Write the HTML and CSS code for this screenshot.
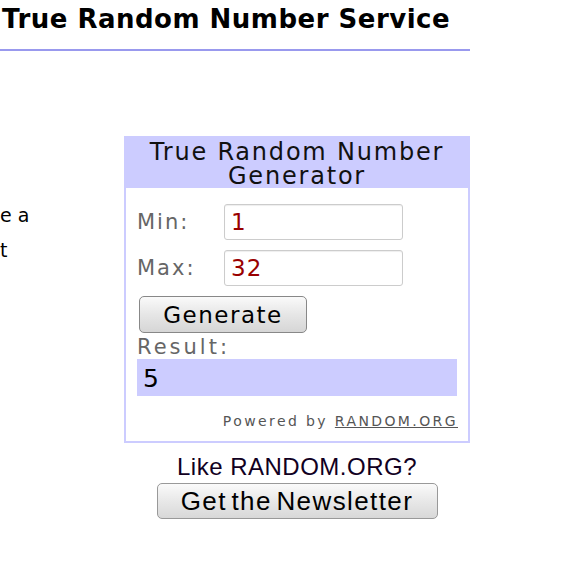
FILE: index.html
```html
<!DOCTYPE html>
<html lang="en">
<head>
  <meta charset="UTF-8" />
  <title>True Random Number Service</title>
  <link rel="stylesheet" href="styles.css">
</head>
<body>

  <!-- Page Title -->
  <h1 class="title">True Random Number Service</h1>
  <div class="rule"></div>

  <div class="content">
    <!-- Intro text (tail of the lines only) -->
    <div class="intro">
      <p>e a</p>
      <p>t</p>
    </div>

    <div class="side">
      <!-- Widget -->
      <div class="widget">
        <div class="widget-head">True Random Number Generator</div>
        <div class="widget-body">
          <div class="field">
            <label>Min:</label>
            <input type="text" value="1" />
          </div>
          <div class="field">
            <label>Max:</label>
            <input type="text" value="32" />
          </div>
          <button class="gen-btn">Generate</button>
          <div class="result-label">Result:</div>
          <div class="result">5</div>
          <div class="powered">Powered by <a href="#">RANDOM.ORG</a></div>
        </div>
      </div>

      <!-- Newsletter -->
      <div class="newsletter">
        <p>Like RANDOM.ORG?</p>
        <button class="news-btn">Get the Newsletter</button>
      </div>
    </div>
  </div>

</body>
</html>
```

FILE: styles.css
```css
body, html {
  margin: 0;
  font-family: "DejaVu Sans", Verdana, sans-serif;
  background: white;
}

/* Title */
.title {
  margin: 0;
  padding: 4px 0 0 2px;
  font-size: 26px;
  letter-spacing: 0.5px;
  line-height: 30px;
  color: #000;
}

.rule {
  width: 470px;
  height: 2px;
  margin-top: 15px;
  background: #9999ee;
}

.content {
  display: flex;
  margin-top: 85px;
}

/* Intro text */
.intro {
  width: 30px;
  padding-top: 62px;
  font-size: 19px;
  color: #000;
}

.intro p {
  margin: 0;
  line-height: 35px;
  white-space: nowrap;
}

.side {
  margin-left: 94px;
  width: 346px;
}

/* Widget */
.widget {
  border: 2px solid #ccccff;
}

.widget-head {
  background: #ccccff;
  text-align: center;
  font-size: 24px;
  letter-spacing: 1.8px;
  line-height: 24px;
  padding: 2px 10px 0;
  height: 48px;
  color: #111;
}

.widget-body {
  padding: 16px 10px 12px 11px;
}

.field {
  display: flex;
  align-items: center;
  margin-bottom: 10px;
}

.field label {
  width: 87px;
  font-size: 21px;
  letter-spacing: 2px;
  color: #666;
}

.field input {
  width: 165px;
  height: 34px;
  padding: 0 6px;
  border: 1px solid #cccccc;
  border-radius: 3px;
  font-family: "DejaVu Sans", Verdana, sans-serif;
  font-size: 23px;
  letter-spacing: 1px;
  color: #990000;
  box-shadow: inset 0 1px 1px #eeeeee;
}

.gen-btn {
  width: 168px;
  height: 37px;
  margin-left: 2px;
  border: 1px solid #888;
  border-radius: 5px;
  background: linear-gradient(#fafafa, #e6e6e6 50%, #d6d6d6);
  font-family: "DejaVu Sans", Verdana, sans-serif;
  font-size: 23px;
  letter-spacing: 1.5px;
  color: #000;
}

.result-label {
  font-size: 21px;
  letter-spacing: 3px;
  color: #666;
  line-height: 24px;
  margin-top: 2px;
}

.result {
  width: 314px;
  height: 37px;
  padding-left: 6px;
  background: #ccccff;
  font-size: 25px;
  line-height: 40px;
  color: #000;
}

.powered {
  text-align: right;
  margin-top: 17px;
  font-size: 14px;
  letter-spacing: 2.4px;
  color: #555;
}

.powered a {
  color: #555;
}

/* Newsletter */
.newsletter {
  text-align: center;
}

.newsletter p {
  margin: 12px 0 4px;
  font-family: "Liberation Sans", Arial, sans-serif;
  font-size: 24px;
  letter-spacing: 0.5px;
  line-height: 24px;
  color: #110022;
}

.news-btn {
  width: 281px;
  height: 36px;
  border: 1px solid #999;
  border-radius: 5px;
  background: linear-gradient(#fafafa, #e8e8e8 50%, #d8d8d8);
  font-family: "Liberation Sans", Arial, sans-serif;
  font-size: 26px;
  letter-spacing: 1.4px;
  word-spacing: -4px;
  color: #000;
}
```
